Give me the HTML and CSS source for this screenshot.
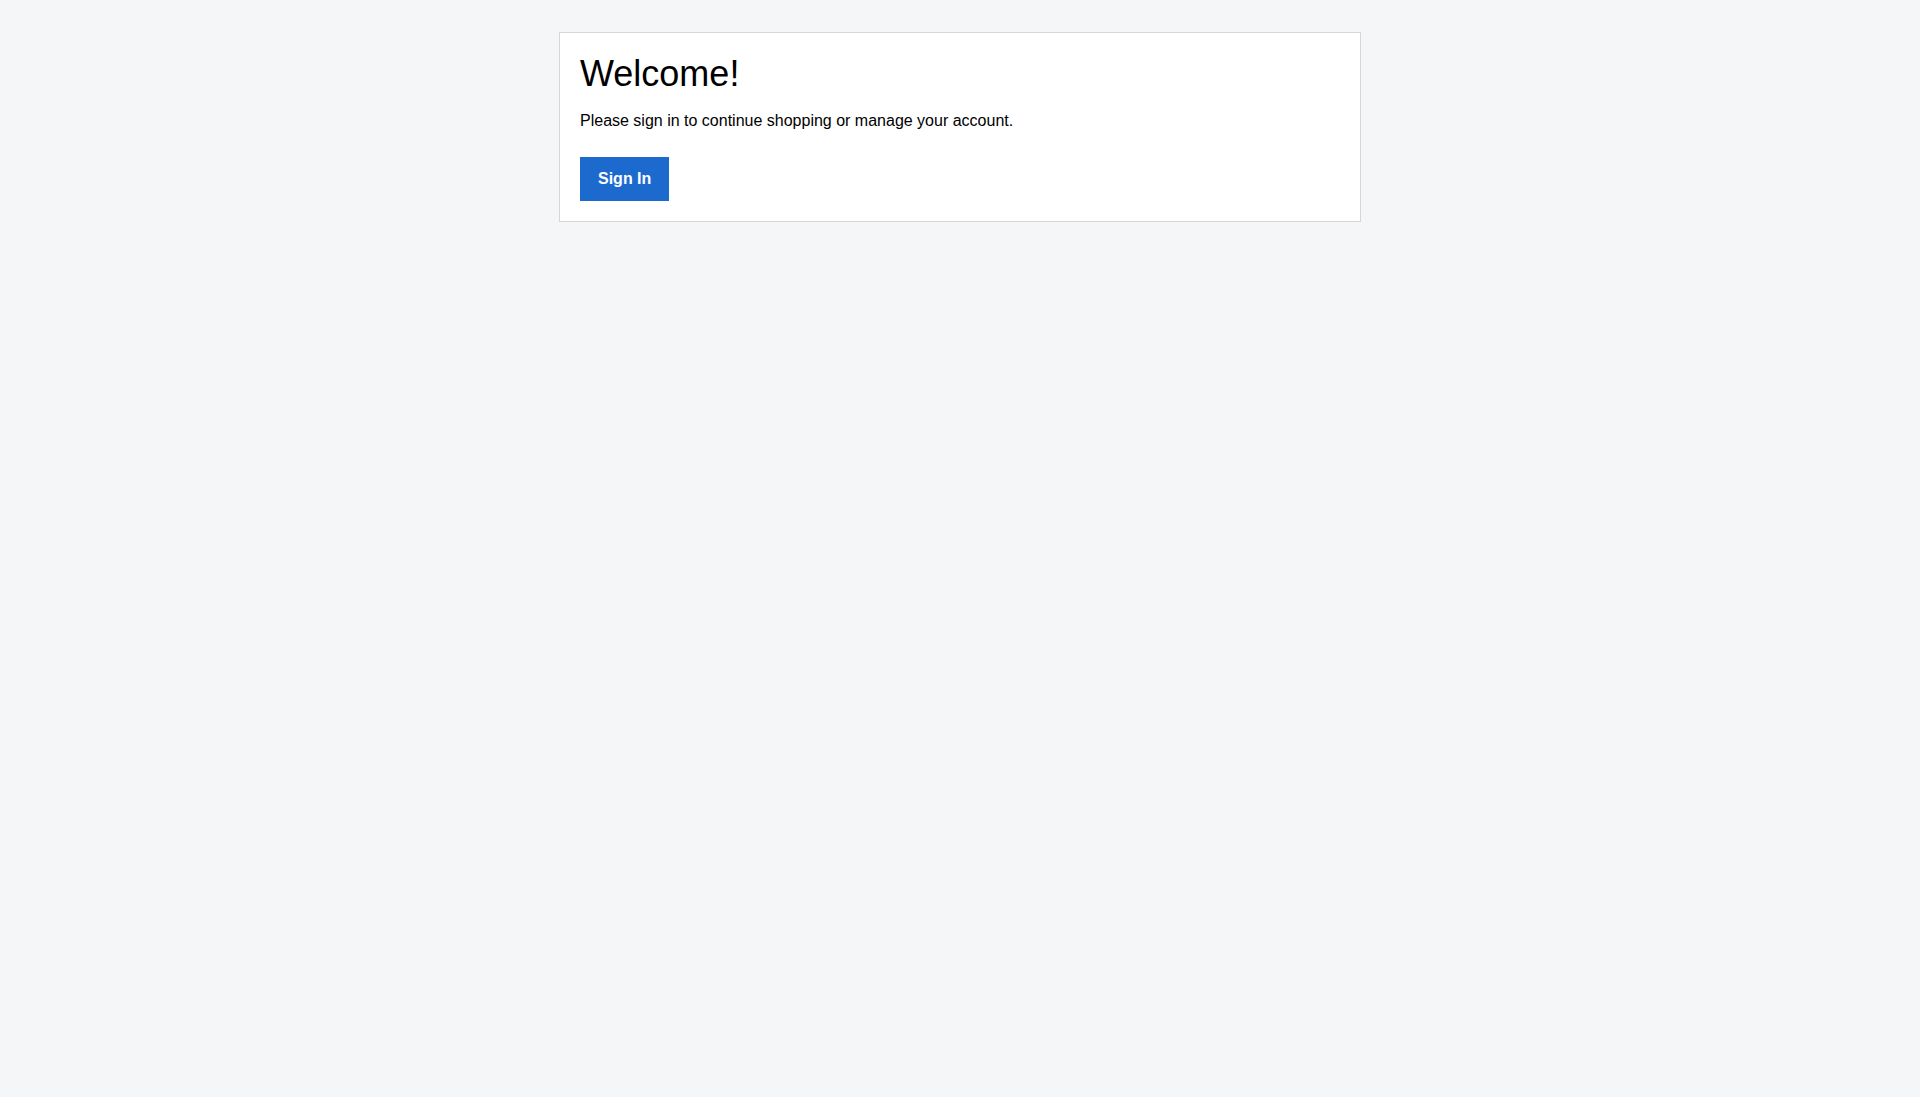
FILE: index.html
```html
<!DOCTYPE html>
<html lang="en">
<head>
  <meta charset="UTF-8">
  <meta name="viewport" content="width=device-width, initial-scale=1.0">
  <title>Welcome</title>
  <link rel="stylesheet" href="styles.css">
</head>
<body>

  <div class="card">
    <h1>Welcome!</h1>
    <p>Please sign in to continue shopping or manage your account.</p>
    <button class="btn-signin">Sign In</button>
  </div>

</body>
</html>
```

FILE: styles.css
```css
body {
  font-family: "Liberation Sans", Arial, sans-serif;
  background-color: #f5f6f8;
  margin: 0;
  padding: 32px 0;
  color: #000;
}
.card {
  width: 760px;
  margin: 0 auto;
  background-color: #fff;
  border: 1px solid #d6d6d6;
  padding: 20px;
}
.card h1 {
  font-size: 36px;
  font-weight: normal;
  margin: 0 0 17px;
}
.card p {
  font-size: 16px;
  margin: 0 0 27px;
}
.btn-signin {
  display: block;
  background-color: #1d6acf;
  color: #fff;
  border: none;
  padding: 13px 18px;
  font-family: inherit;
  font-size: 16px;
  font-weight: bold;
  cursor: pointer;
}
```
